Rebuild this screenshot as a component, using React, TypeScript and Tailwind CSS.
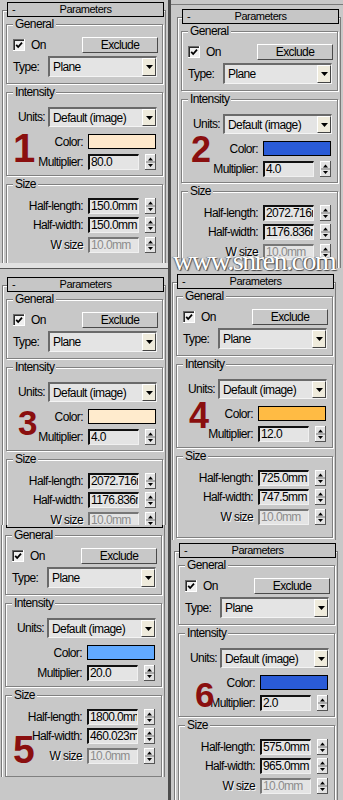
import React from 'react';

type RolloutProps = {
  color: string;
  multiplier: string;
  halfLength: string;
  halfWidth: string;
  digit: React.ReactNode;
};

const TXT = 'text-[12px] leading-[14px] tracking-[-0.6px] text-black';
const GROUP =
  'border border-[#808080] shadow-[1px_1px_0_#fff,inset_1px_1px_0_#fff]';

function Spinner() {
  return (
    <svg width="11" height="16" viewBox="0 0 11 16" className="block shrink-0">
      <rect width="11" height="16" fill="#e2e2e2" />
      <path d="M0 0H11M0 0V16" stroke="#fff" strokeWidth="2" />
      <path d="M0 15.5H11M10.5 0V16" stroke="#555" />
      <path d="M1 8H10" stroke="#777" />
      <path d="M3 6.5H8L5.5 3.5Z" fill="#000" />
      <path d="M3 10H8L5.5 13Z" fill="#000" />
    </svg>
  );
}

function CheckBox() {
  return (
    <svg width="12" height="12" viewBox="0 0 12 12" className="block shrink-0">
      <rect width="12" height="12" fill="#fff" />
      <rect width="11" height="11" fill="#6a6a6a" />
      <rect x="1" y="1" width="10" height="10" fill="#2a2a2a" />
      <rect x="2" y="2" width="9" height="9" fill="#f0f0f0" />
      <path d="M3.2 5.8L5.2 8L9 3.6" stroke="#000" strokeWidth="1.8" fill="none" />
    </svg>
  );
}

function Dropdown({ value, tall }: { value: string; tall?: boolean }) {
  return (
    <div
      className={`flex w-[109px] border-l-2 border-t-2 border-b border-r border-l-[#6a6a6a] border-t-[#6a6a6a] border-b-[#f4f4f4] border-r-[#f4f4f4] bg-[#e4e4e4] ${
        tall ? 'h-[21px]' : 'h-[20px]'
      }`}
    >
      <span className={`${TXT} flex-1 self-center pl-[3px] text-[12.5px]`}>{value}</span>
      <div className="flex w-[14px] items-center justify-center border-l border-t border-b border-r border-l-white border-t-white border-b-[#444] border-r-[#444] bg-[#efebdc]">
        <svg width="7" height="4" viewBox="0 0 7 4" className="block">
          <path d="M0 0H7L3.5 4Z" fill="#000" />
        </svg>
      </div>
    </div>
  );
}

function Field({ value, disabled }: { value: string; disabled?: boolean }) {
  return (
    <div
      className={`flex h-[16px] w-[51px] items-center overflow-hidden whitespace-nowrap border-l-2 border-t-2 border-b border-r border-b-[#f0f0f0] border-r-[#f0f0f0] bg-[#e4e4e4] pl-[1px] text-[12px] leading-[13px] tracking-[-0.6px] ${
        disabled
          ? 'border-l-[#777] border-t-[#777] text-[#8c8c8c]'
          : 'border-l-[#111] border-t-[#111] text-black'
      }`}
    >
      {value}
    </div>
  );
}

function Row({ label, value, disabled }: { label: string; value: string; disabled?: boolean }) {
  return (
    <div className="flex h-[16px] items-center">
      <span
        className={`${TXT} w-[76px] text-right ${
          disabled ? 'text-[#8c8c8c] [text-shadow:1px_1px_0_#f4f4f4]' : ''
        }`}
      >
        {label}
      </span>
      <div className="ml-[5px]">
        <Field value={value} disabled={disabled} />
      </div>
      <div className="ml-[6px]">
        <Spinner />
      </div>
    </div>
  );
}

function Legend({ children }: { children: React.ReactNode }) {
  return (
    <span className={`${TXT} -mt-[8px] ml-[6px] block w-fit bg-[#c8c8c8] px-[2px]`}>
      {children}
    </span>
  );
}

function Rollout({ color, multiplier, halfLength, halfWidth, digit }: RolloutProps) {
  return (
    <div className="relative w-[164px]">
      <div className="relative z-10 ml-[5px] flex h-[15px] w-[157px] items-center border border-black bg-[#c6c6c6] text-[11px] leading-[13px] tracking-[-0.5px] text-black">
        <span className="w-[14px] pl-[4px]">-</span>
        <span className="flex-1 pr-[14px] text-center">Parameters</span>
      </div>
      <div className="-mt-[7px] h-[258px] border-l border-r border-t border-[#7a7a7a] pt-[13px] shadow-[inset_1px_1px_0_#fff]">
        {/* General */}
        <div className={`${GROUP} ml-[3px] h-[60px] w-[157px]`}>
          <Legend>General</Legend>
          <div className="mt-[6px] flex h-[16px] items-center pl-[6px]">
            <CheckBox />
            <span className={`${TXT} ml-[6px]`}>On</span>
            <div
              className={`${TXT} ml-auto mr-[4px] flex h-[16px] w-[76px] items-center justify-center border-l border-t border-b border-r border-l-white border-t-white border-b-[#4a4a4a] border-r-[#4a4a4a] bg-[#c8c8c8]`}
            >
              Exclude
            </div>
          </div>
          <div className="mt-[3px] flex items-center">
            <span className={`${TXT} w-[41px] pl-[6px]`}>Type:</span>
            <Dropdown value="Plane" tall />
          </div>
        </div>

        {/* Intensity */}
        <div className={`${GROUP} ml-[3px] mt-[8px] h-[84px] w-[157px]`}>
          <Legend>Intensity</Legend>
          <div className="mt-[8px] flex items-center">
            <span className={`${TXT} w-[41px] pl-[11px]`}>Units:</span>
            <Dropdown value="Default (image)" />
          </div>
          <div className="mt-[7px] flex h-[15px] items-center">
            <span className={`${TXT} w-[76px] text-right`}>Color:</span>
            <div className="ml-[5px] h-[15px] w-[68px] border border-black" style={{ backgroundColor: color }} />
          </div>
          <div className="mt-[5px]">
            <Row label="Multiplier:" value={multiplier} />
          </div>
        </div>

        {/* Size */}
        <div className={`${GROUP} ml-[3px] mt-[8px] h-[82px] w-[157px]`}>
          <Legend>Size</Legend>
          <div className="mt-[7px]">
            <Row label="Half-length:" value={halfLength} />
          </div>
          <div className="mt-[3px]">
            <Row label="Half-width:" value={halfWidth} />
          </div>
          <div className="mt-[4px]">
            <Row label="W size" value="10.0mm" disabled />
          </div>
        </div>
      </div>
      {digit}
    </div>
  );
}

const DIGIT = "absolute z-20 font-['Liberation_Sans',Arial,sans-serif] font-bold leading-none text-[#8a0f0f]";

export default function App() {
  return (
    <div className="relative h-[800px] w-[343px] overflow-hidden bg-[#c8c8c8] font-['Liberation_Sans',Arial,sans-serif]">
      <div className="flex h-full">
        {/* left column */}
        <div className="flex w-[168px] flex-col">
          <div className="h-[263px] overflow-hidden pl-[2px] pt-[2px]">
            <Rollout
              color="#ffe9cc"
              multiplier="80.0"
              halfLength="150.0mm"
              halfWidth="150.0mm"
              digit={<span className={`${DIGIT} left-[11px] top-[126px] text-[40px]`}>1</span>}
            />
          </div>
          <div className="h-[5px] bg-[#e2e2e2]" />
          <div className="h-[257px] overflow-hidden border-t border-[#555] pl-[2px] pt-[8px]">
            <Rollout
              color="#ffebcd"
              multiplier="4.0"
              halfLength="2072.716mm"
              halfWidth="1176.836mm"
              digit={<span className={`${DIGIT} left-[16px] top-[128px] text-[35px]`}>3</span>}
            />
          </div>
          <div className="h-[252px] overflow-hidden pl-[1px]">
            <div className="-mt-[12px]">
              <Rollout
                color="#62aaff"
                multiplier="20.0"
                halfLength="1800.0mm"
                halfWidth="460.023mm"
                digit={<span className={`${DIGIT} left-[12px] top-[217px] text-[39px]`}>5</span>}
              />
            </div>
          </div>
          <div className="flex-1 bg-[#c8c8c8]" />
        </div>

        {/* divider */}
        <div className="w-[3px] bg-[#4d4d4d]" />

        {/* right column */}
        <div className="flex w-[172px] flex-col">
          <div className="h-[5px] border-b border-[#7a7a7a]" />
          <div className="h-[263px] overflow-hidden pl-[6px] pt-[4px]">
            <Rollout
              color="#2a5bd7"
              multiplier="4.0"
              halfLength="2072.716mm"
              halfWidth="1176.836mm"
              digit={<span className={`${DIGIT} left-[14px] top-[123px] text-[36px]`}>2</span>}
            />
          </div>
          <div className="h-[272px] overflow-hidden pl-[1px] pt-[6px]">
            <Rollout
              color="#ffbb44"
              multiplier="12.0"
              halfLength="725.0mm"
              halfWidth="747.5mm"
              digit={<span className={`${DIGIT} left-[17px] top-[124px] text-[36px]`}>4</span>}
            />
          </div>
          <div className="flex-1 overflow-hidden pl-[3px] pt-[3px]">
            <Rollout
              color="#2a5bd7"
              multiplier="2.0"
              halfLength="575.0mm"
              halfWidth="965.0mm"
              digit={<span className={`${DIGIT} left-[21px] top-[134px] text-[35px]`}>6</span>}
            />
          </div>
        </div>
      </div>

      {/* watermark */}
      <div className="pointer-events-none absolute left-[173px] top-[247px] z-30 whitespace-nowrap font-['Liberation_Serif','Times_New_Roman',serif] text-[28px] leading-none tracking-[-1.5px] text-white [text-shadow:1px_1px_1px_#444,-1px_0_1px_#666]">
        www.snren.com
      </div>
    </div>
  );
}
